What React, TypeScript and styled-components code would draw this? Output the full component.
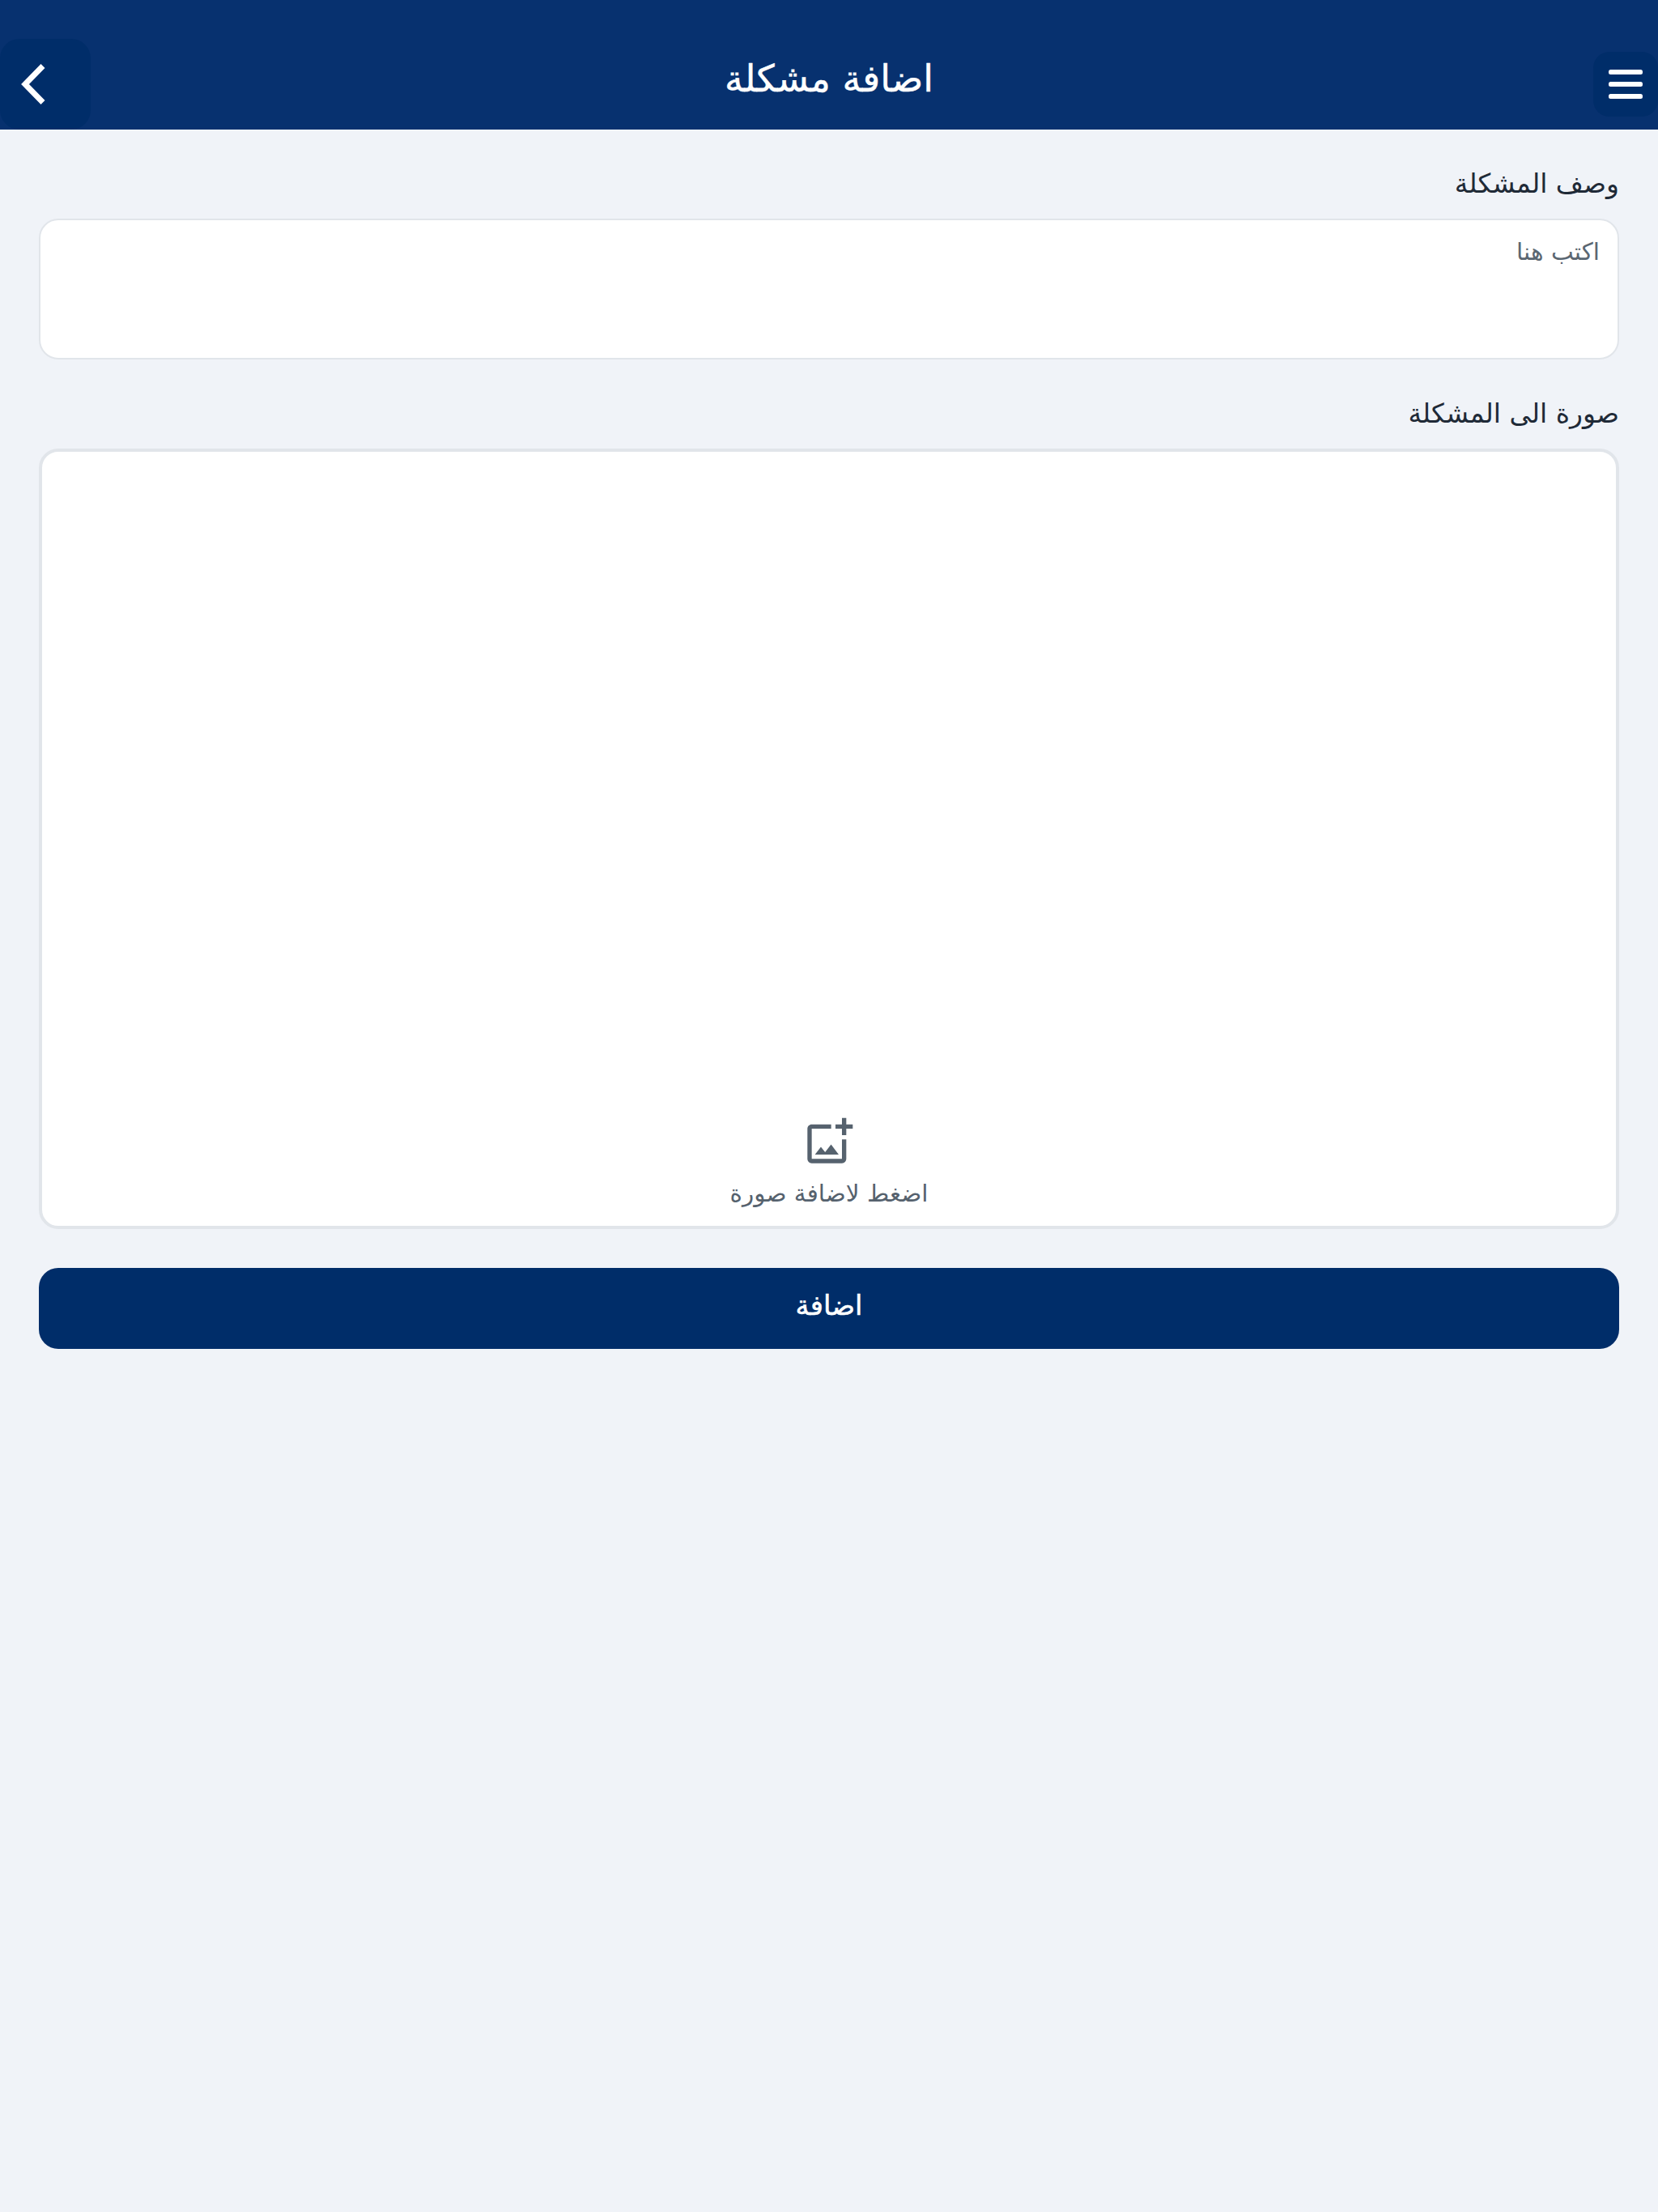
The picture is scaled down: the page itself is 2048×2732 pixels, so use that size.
import React from "react";
import styled, { createGlobalStyle } from "styled-components";
import { MdOutlineAddPhotoAlternate } from "react-icons/md";

const Global = createGlobalStyle`
  html, body { margin: 0; padding: 0; background: #f0f3f8; }
  body { font-family: "DejaVu Sans", "Noto Sans", sans-serif; }
`;

const Page = styled.div`
  direction: rtl;
  width: 2048px;
  min-height: 2732px;
  background: #f0f3f8;
`;

const Header = styled.header`
  display: grid;
  grid-template-columns: 1fr auto 1fr;
  align-items: center;
  height: 160px;
  padding-top: 48px;
  box-sizing: border-box;
  background: #07316f;
`;

const IconButton = styled.button<{ $size: number; $radius: number; $end?: boolean }>`
  display: flex;
  align-items: center;
  justify-content: center;
  width: ${(p) => p.$size}px;
  height: ${(p) => p.$size}px;
  padding: 0;
  border: none;
  border-radius: ${(p) => p.$radius}px;
  background: #002d69;
  justify-self: ${(p) => (p.$end ? "end" : "start")};
`;

const Title = styled.h1`
  margin: 0 0 14px;
  color: #fff;
  font-size: 46px;
  font-weight: 400;
  line-height: 50px;
  -webkit-text-stroke: 0.4px #fff;
`;

const Form = styled.main`
  display: flex;
  flex-direction: column;
  padding: 38px 48px 0;
`;

const Label = styled.label<{ $top?: number }>`
  display: block;
  height: 72px;
  color: #1f2a37;
  font-size: 33px;
  line-height: 57px;
  margin-top: ${(p) => p.$top ?? 0}px;
`;

const Note = styled.textarea`
  display: block;
  box-sizing: border-box;
  width: 100%;
  height: 174px;
  padding: 20px 22px;
  border: 2px solid #e1e5ea;
  border-radius: 24px;
  background: #fff;
  resize: none;
  outline: none;
  font-family: inherit;
  font-size: 29.5px;
  line-height: 38px;
  &::placeholder { color: #5b6772; opacity: 1; }
`;

const PhotoBox = styled.div`
  display: flex;
  flex-direction: column;
  justify-content: flex-end;
  align-items: center;
  box-sizing: border-box;
  height: 964px;
  padding-bottom: 22px;
  border: 4px solid #e1e5ea;
  border-radius: 24px;
  background: #fff;
  color: #56626e;
`;

const PhotoHint = styled.span`
  font-size: 29.5px;
  line-height: 36px;
  margin-top: 14px;
`;

const Submit = styled.button`
  height: 100px;
  margin-top: 48px;
  padding: 0 0 8px;
  border: none;
  border-radius: 24px;
  background: #002d69;
  color: #fff;
  font-family: inherit;
  font-size: 34px;
  font-weight: 400;
  -webkit-text-stroke: 0.5px #fff;
`;

export default function App() {
  return (
    <Page>
      <Global />
      <Header>
        <IconButton $size={80} $radius={20} aria-label="القائمة">
          <svg width="42" height="36" viewBox="0 0 42 36" fill="#fff">
            <rect x="0" y="0" width="42" height="6" rx="2.5" />
            <rect x="0" y="15" width="42" height="6" rx="2.5" />
            <rect x="0" y="30" width="42" height="6" rx="2.5" />
          </svg>
        </IconButton>
        <Title>اضافة مشكلة</Title>
        <IconButton $size={112} $radius={24} $end aria-label="رجوع">
          <svg width="112" height="112" viewBox="0 0 112 112" fill="none" stroke="#fff" strokeWidth="7" strokeLinecap="butt" strokeLinejoin="miter">
            <path d="M53 33.5 L31 56 L53 78.5" />
          </svg>
        </IconButton>
      </Header>
      <Form>
        <Label>وصف المشكلة</Label>
        <Note placeholder="اكتب هنا" />
        <Label $top={38}>صورة الى المشكلة</Label>
        <PhotoBox>
          <MdOutlineAddPhotoAlternate size={64} />
          <PhotoHint>اضغط لاضافة صورة</PhotoHint>
        </PhotoBox>
        <Submit>اضافة</Submit>
      </Form>
    </Page>
  );
}
